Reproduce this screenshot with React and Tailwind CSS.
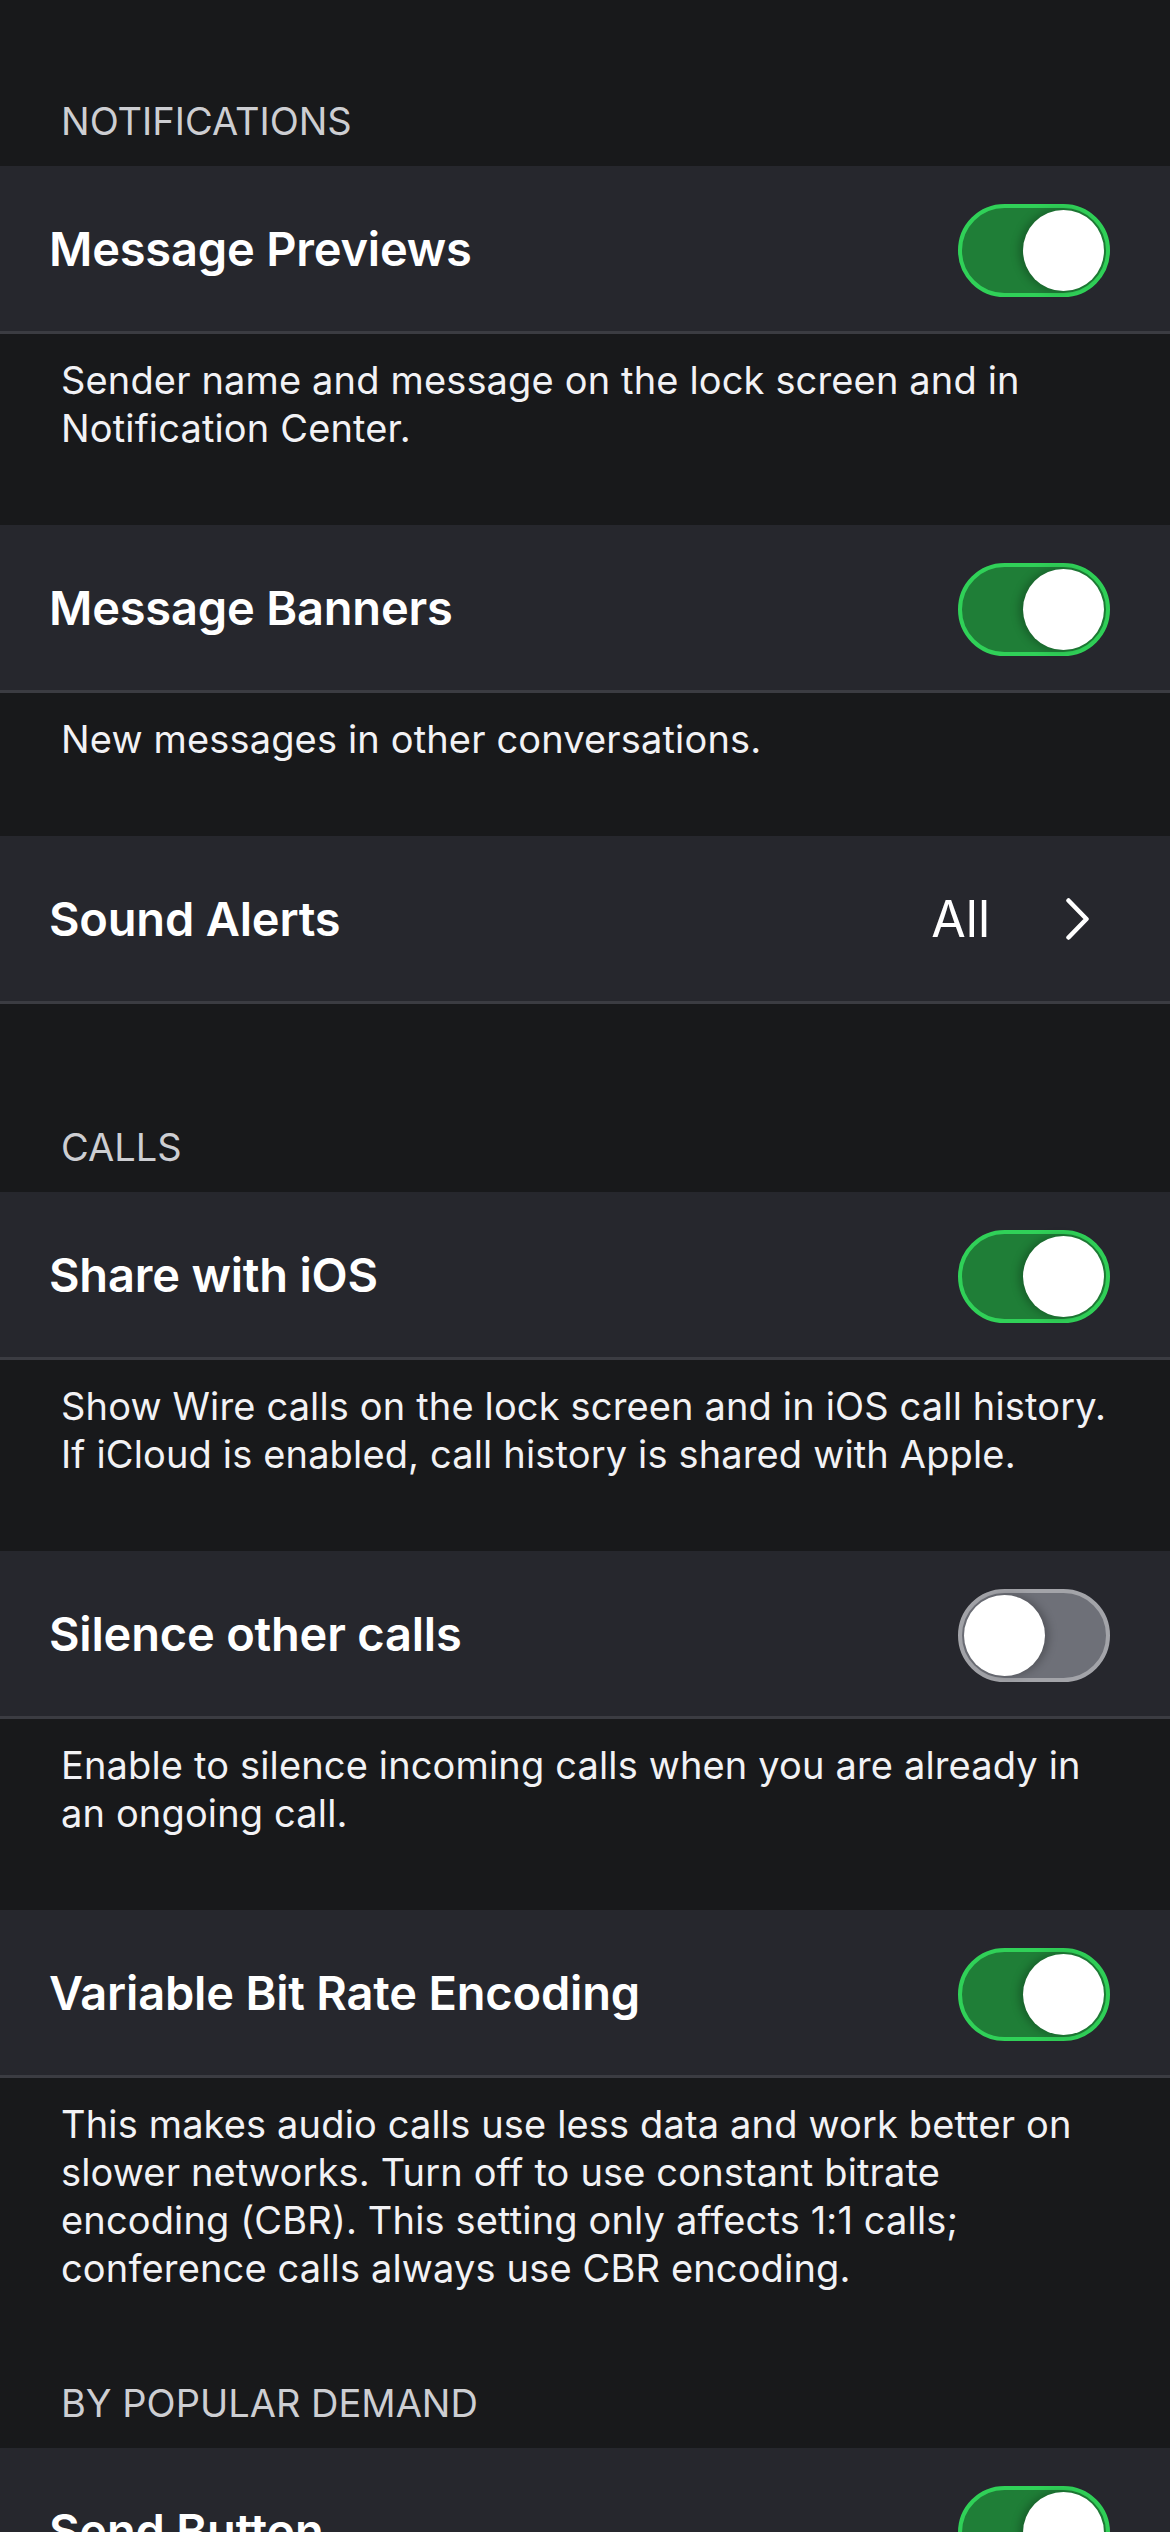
import React from 'react'

const font = { fontFamily: 'Inter, "Noto Sans", sans-serif' }

function Toggle({ on }) {
    return on ? (
        <div className="w-[152px] h-[93px] rounded-full border-[4px] border-[#30d158] bg-[#1f7e37] flex items-center justify-end pr-[2px] mt-[3px] shrink-0">
            <div className="w-[81px] h-[81px] rounded-full bg-white shadow-[-4px_0_8px_rgba(0,0,0,0.25)]"></div>
        </div>
    ) : (
        <div className="w-[152px] h-[93px] rounded-full border-[4px] border-[#a3a4a9] bg-[#6e7078] flex items-center justify-start pl-[2px] mt-[3px] shrink-0">
            <div className="w-[81px] h-[81px] rounded-full bg-white shadow-[4px_0_8px_rgba(0,0,0,0.25)]"></div>
        </div>
    )
}

function Chevron() {
    return (
        <svg width="23" height="42" viewBox="0 0 23 42" fill="none" className="shrink-0">
            <polyline points="2.5,2.5 20.5,21 2.5,39.5" stroke="#ffffff" strokeWidth="4.5" strokeLinecap="round" strokeLinejoin="round" />
        </svg>
    )
}

function SectionHeader({ title, top }) {
    return (
        <div className={`${top} pb-[21px] px-[61px] text-[38px] leading-[48px] text-[#cdced2]`}>
            {title}
        </div>
    )
}

function Cell({ title, toggle, value }) {
    return (
        <div className="h-[168px] bg-[#26272d] border-b-[3px] border-[#3b3c42] flex items-center justify-between pl-[49px]">
            <span className="text-[47px] leading-[57px] font-semibold text-white tracking-[-0.2px]">{title}</span>
            {value ? (
                <div className="flex items-center gap-[76px] pr-[81px]">
                    <span className="text-[50px] leading-[60px] text-white">{value}</span>
                    <Chevron />
                </div>
            ) : (
                <div className="pr-[60px]">
                    <Toggle on={toggle} />
                </div>
            )}
        </div>
    )
}

function Footer({ children, last }) {
    return (
        <div className={`pt-[22px] ${last ? 'pb-0' : 'pb-[73px]'} px-[61px] text-[38px] leading-[48px] tracking-[0.15px] text-[#f2f2f5]`}>
            {children}
        </div>
    )
}

export default function App() {
    return (
        <div className="min-h-screen w-[1170px] bg-[#18191b] overflow-hidden" style={font}>
            {/* Notifications */}
            <SectionHeader title="NOTIFICATIONS" top="pt-[97px]" />
            <Cell title="Message Previews" toggle />
            <Footer>Sender name and message on the lock screen and in Notification Center.</Footer>
            <Cell title="Message Banners" toggle />
            <Footer>New messages in other conversations.</Footer>
            <Cell title="Sound Alerts" value="All" />

            {/* Calls */}
            <SectionHeader title="CALLS" top="pt-[119px]" />
            <Cell title="Share with iOS" toggle />
            <Footer>Show Wire calls on the lock screen and in iOS call history. If iCloud is enabled, call history is shared with Apple.</Footer>
            <Cell title="Silence other calls" toggle={false} />
            <Footer>Enable to silence incoming calls when you are already in an ongoing call.</Footer>
            <Cell title="Variable Bit Rate Encoding" toggle />
            <Footer last>
                This makes audio calls use less data and work better on slower networks. Turn off to use constant bitrate encoding (CBR). This setting only affects 1:1 calls; conference calls always use CBR encoding.
            </Footer>

            {/* By popular demand */}
            <SectionHeader title="BY POPULAR DEMAND" top="pt-[87px]" />
            <Cell title="Send Button" toggle />
        </div>
    )
}
